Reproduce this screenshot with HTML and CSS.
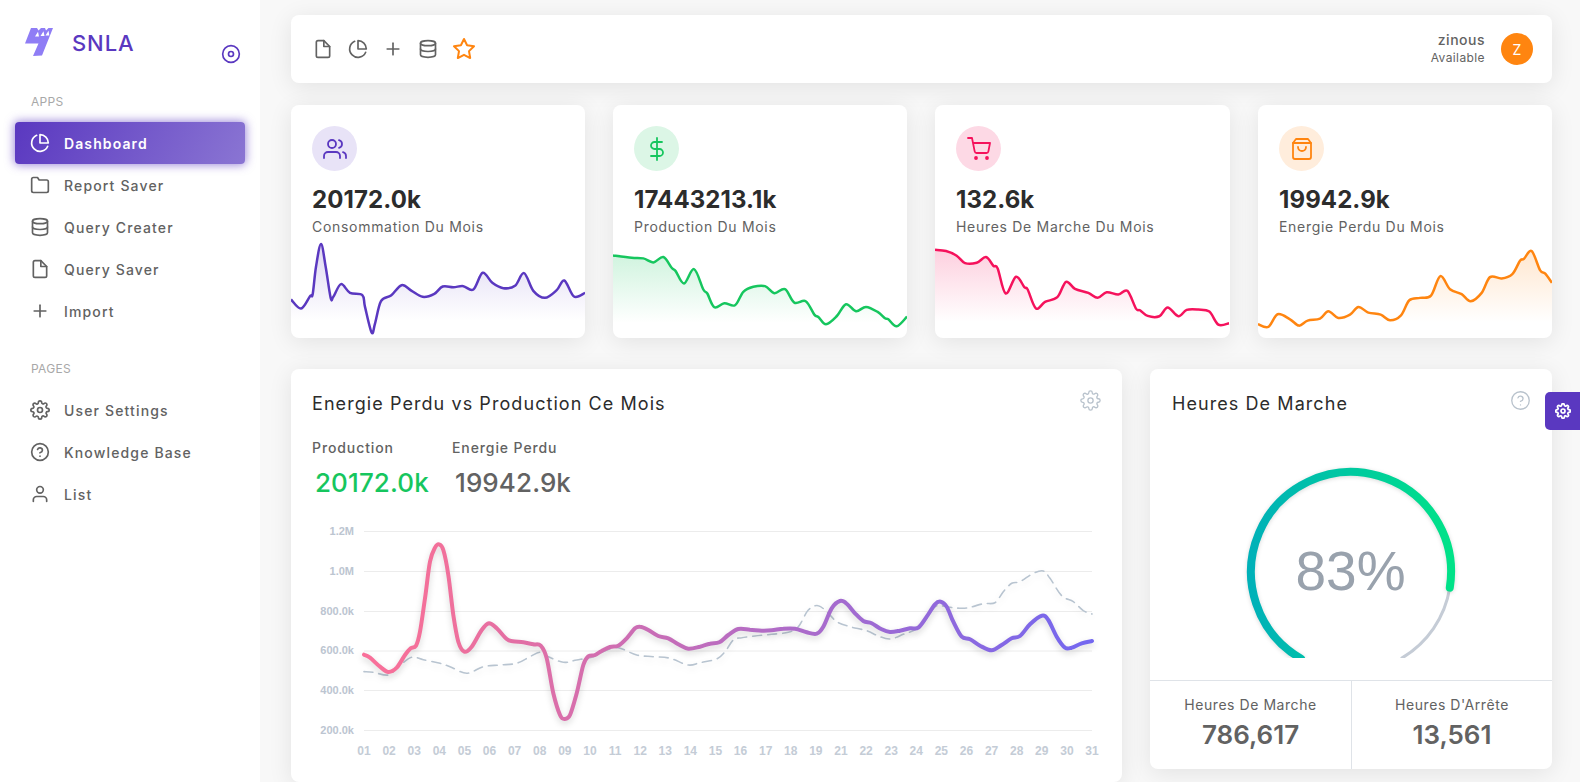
FILE: index.html
```html
<!DOCTYPE html>
<html lang="en">
<head>
<meta charset="utf-8">
<title>SNLA Dashboard</title>
<link rel="stylesheet" href="styles.css">
</head>
<body>
<svg class="sprite" aria-hidden="true">
  <symbol id="i-file" viewBox="0 0 24 24"><path d="M13 2H6a2 2 0 0 0-2 2v16a2 2 0 0 0 2 2h12a2 2 0 0 0 2-2V9z"/><polyline points="13 2 13 9 20 9"/></symbol>
  <symbol id="i-pie" viewBox="0 0 24 24"><path d="M21.21 15.89A10 10 0 1 1 8 2.83"/><path d="M22 12A10 10 0 0 0 12 2v10z"/></symbol>
  <symbol id="i-plus" viewBox="0 0 24 24"><line x1="12" y1="5" x2="12" y2="19"/><line x1="5" y1="12" x2="19" y2="12"/></symbol>
  <symbol id="i-db" viewBox="0 0 24 24"><ellipse cx="12" cy="5" rx="9" ry="3"/><path d="M21 12c0 1.66-4 3-9 3s-9-1.34-9-3"/><path d="M3 5v14c0 1.66 4 3 9 3s9-1.34 9-3V5"/></symbol>
  <symbol id="i-star" viewBox="0 0 24 24"><polygon points="12 2 15.09 8.26 22 9.27 17 14.14 18.18 21.02 12 17.77 5.82 21.02 7 14.14 2 9.27 8.91 8.26 12 2"/></symbol>
  <symbol id="i-users" viewBox="0 0 24 24"><path d="M17 21v-2a4 4 0 0 0-4-4H5a4 4 0 0 0-4 4v2"/><circle cx="9" cy="7" r="4"/><path d="M23 21v-2a4 4 0 0 0-3-3.87"/><path d="M16 3.13a4 4 0 0 1 0 7.75"/></symbol>
  <symbol id="i-dollar" viewBox="0 0 24 24"><line x1="12" y1="1" x2="12" y2="23"/><path d="M17 5H9.5a3.5 3.5 0 0 0 0 7h5a3.5 3.5 0 0 1 0 7H6"/></symbol>
  <symbol id="i-cart" viewBox="0 0 24 24"><circle cx="9" cy="21" r="1"/><circle cx="20" cy="21" r="1"/><path d="M1 1h4l2.68 13.39a2 2 0 0 0 2 1.61h9.72a2 2 0 0 0 2-1.61L23 6H6"/></symbol>
  <symbol id="i-bag" viewBox="0 0 24 24"><path d="M6 2L3 6v14a2 2 0 0 0 2 2h14a2 2 0 0 0 2-2V6l-3-4z"/><line x1="3" y1="6" x2="21" y2="6"/><path d="M16 10a4 4 0 0 1-8 0"/></symbol>
  <symbol id="i-folder" viewBox="0 0 24 24"><path d="M22 19a2 2 0 0 1-2 2H4a2 2 0 0 1-2-2V5a2 2 0 0 1 2-2h5l2 3h9a2 2 0 0 1 2 2z"/></symbol>
  <symbol id="i-gear" viewBox="0 0 24 24"><circle cx="12" cy="12" r="3"/><path d="M19.4 15a1.65 1.65 0 0 0 .33 1.82l.06.06a2 2 0 0 1 0 2.83 2 2 0 0 1-2.83 0l-.06-.06a1.65 1.65 0 0 0-1.82-.33 1.65 1.65 0 0 0-1 1.51V21a2 2 0 0 1-2 2 2 2 0 0 1-2-2v-.09A1.65 1.65 0 0 0 9 19.4a1.65 1.65 0 0 0-1.82.33l-.06.06a2 2 0 0 1-2.83 0 2 2 0 0 1 0-2.83l.06-.06a1.65 1.65 0 0 0 .33-1.82 1.65 1.65 0 0 0-1.51-1H3a2 2 0 0 1-2-2 2 2 0 0 1 2-2h.09A1.65 1.65 0 0 0 4.6 9a1.65 1.65 0 0 0-.33-1.82l-.06-.06a2 2 0 0 1 0-2.83 2 2 0 0 1 2.83 0l.06.06a1.65 1.65 0 0 0 1.82.33H9a1.65 1.65 0 0 0 1-1.51V3a2 2 0 0 1 2-2 2 2 0 0 1 2 2v.09a1.65 1.65 0 0 0 1 1.51 1.65 1.65 0 0 0 1.82-.33l.06-.06a2 2 0 0 1 2.83 0 2 2 0 0 1 0 2.83l-.06.06a1.65 1.65 0 0 0-.33 1.82V9a1.65 1.65 0 0 0 1.51 1H21a2 2 0 0 1 2 2 2 2 0 0 1-2 2h-.09a1.65 1.65 0 0 0-1.51 1z"/></symbol>
  <symbol id="i-help" viewBox="0 0 24 24"><circle cx="12" cy="12" r="10"/><path d="M9.09 9a3 3 0 0 1 5.83 1c0 2-3 3-3 3"/><line x1="12" y1="17" x2="12.01" y2="17"/></symbol>
  <symbol id="i-user" viewBox="0 0 24 24"><path d="M20 21v-2a4 4 0 0 0-4-4H8a4 4 0 0 0-4 4v2"/><circle cx="12" cy="7" r="4"/></symbol>
  <symbol id="i-disc" viewBox="0 0 24 24"><circle cx="12" cy="12" r="10"/><circle cx="12" cy="12" r="3"/></symbol>
</svg>

<aside class="sidebar">
  <div class="brand">
    <svg class="brand-logo" viewBox="25 28 28 28"><path class="bolt" d="M31 28L37 28L38.500 30.500L41 28L45 28L46 30.500L48.500 28L53 28L42 55.500L33 56L38.500 43.500L25 43.500Z"/><path class="bolt-notch" d="M35 36.500L38 31.800L39 36.500ZM40.500 36L43.500 31.300L44.500 36ZM45.500 35.500L48.500 30.800L49.300 35.500Z"/></svg>
    <span class="brand-name">SNLA</span>
    <svg class="ico brand-toggle"><use href="#i-disc"/></svg>
  </div>
  <div class="nav-label">APPS</div>
  <nav class="nav">
    <a class="nav-item active"><svg class="ico"><use href="#i-pie"/></svg>Dashboard</a>
    <a class="nav-item"><svg class="ico"><use href="#i-folder"/></svg>Report Saver</a>
    <a class="nav-item"><svg class="ico"><use href="#i-db"/></svg>Query Creater</a>
    <a class="nav-item"><svg class="ico"><use href="#i-file"/></svg>Query Saver</a>
    <a class="nav-item"><svg class="ico"><use href="#i-plus"/></svg>Import</a>
  </nav>
  <div class="nav-label nav-label-pages">PAGES</div>
  <nav class="nav">
    <a class="nav-item"><svg class="ico"><use href="#i-gear"/></svg>User Settings</a>
    <a class="nav-item"><svg class="ico"><use href="#i-help"/></svg>Knowledge Base</a>
    <a class="nav-item"><svg class="ico"><use href="#i-user"/></svg>List</a>
  </nav>
</aside>

<main class="main">
  <header class="topbar card">
    <div class="shortcuts">
      <svg class="ico"><use href="#i-file"/></svg>
      <svg class="ico"><use href="#i-pie"/></svg>
      <svg class="ico"><use href="#i-plus"/></svg>
      <svg class="ico"><use href="#i-db"/></svg>
      <svg class="ico ico-star"><use href="#i-star"/></svg>
    </div>
    <div class="profile">
      <div class="profile-text">
        <div class="profile-name">zinous</div>
        <div class="profile-status">Available</div>
      </div>
      <div class="avatar">Z</div>
    </div>
  </header>

  <section class="stats">
    <article class="stat card">
      <div class="stat-icon tone-purple"><svg class="ico"><use href="#i-users"/></svg></div>
      <div class="stat-value">20172.0k</div>
      <div class="stat-label">Consommation Du Mois</div>
      <svg class="spark" id="spark-a" viewBox="3 690 882 293" preserveAspectRatio="none"></svg>
    </article>
    <article class="stat card">
      <div class="stat-icon tone-green"><svg class="ico"><use href="#i-dollar"/></svg></div>
      <div class="stat-value">17443213.1k</div>
      <div class="stat-label">Production Du Mois</div>
      <svg class="spark" id="spark-b" viewBox="9 420 882 293" preserveAspectRatio="none"></svg>
    </article>
    <article class="stat card">
      <div class="stat-icon tone-pink"><svg class="ico"><use href="#i-cart"/></svg></div>
      <div class="stat-value">132.6k</div>
      <div class="stat-label">Heures De Marche Du Mois</div>
      <svg class="spark" id="spark-c" viewBox="15 420 885 293" preserveAspectRatio="none"></svg>
    </article>
    <article class="stat card">
      <div class="stat-icon tone-orange"><svg class="ico"><use href="#i-bag"/></svg></div>
      <div class="stat-value">19942.9k</div>
      <div class="stat-label">Energie Perdu Du Mois</div>
      <svg class="spark" id="spark-d" viewBox="24 690 882 293" preserveAspectRatio="none"></svg>
    </article>
  </section>

  <section class="panels">
    <article class="panel panel-chart card">
      <div class="panel-head">
        <h2 class="panel-title">Energie Perdu vs Production Ce Mois</h2>
        <svg class="ico panel-action"><use href="#i-gear"/></svg>
      </div>
      <div class="totals">
        <div class="total">
          <div class="total-label">Production</div>
          <div class="total-value total-green">20172.0k</div>
        </div>
        <div class="total">
          <div class="total-label">Energie Perdu</div>
          <div class="total-value">19942.9k</div>
        </div>
      </div>
      <svg class="line-chart" id="line-chart" viewBox="291 510 831 272"></svg>
    </article>

    <article class="panel panel-gauge card">
      <div class="panel-head">
        <h2 class="panel-title">Heures De Marche</h2>
        <svg class="ico panel-action"><use href="#i-help"/></svg>
      </div>
      <svg class="gauge" viewBox="1150 416 402 242">
        <defs>
          <linearGradient id="gauge-grad" gradientUnits="userSpaceOnUse" x1="1251" y1="0" x2="1451" y2="0">
            <stop offset="0" stop-color="#00b1b8"/>
            <stop offset="1" stop-color="#00e288"/>
          </linearGradient>
        </defs>
        <path class="gauge-track" d="M1449.8 587.6A100 100 0 0 1 1401 658.6"/>
        <path class="gauge-arc" d="M1301 658.6A100 100 0 1 1 1449.8 587.6"/>
        <text class="gauge-text" x="1350.500" y="590" text-anchor="middle">83%</text>
      </svg>
      <div class="gauge-foot">
        <div class="foot-cell">
          <div class="foot-label">Heures De Marche</div>
          <div class="foot-value">786,617</div>
        </div>
        <div class="foot-cell">
          <div class="foot-label">Heures D'Arrête</div>
          <div class="foot-value">13,561</div>
        </div>
      </div>
    </article>
  </section>
</main>

<button class="customizer" aria-label="Settings"><svg class="ico"><use href="#i-gear"/></svg></button>
<script src="chart.js"></script>
</body>
</html>
```
FILE: styles.css
```css
* { box-sizing: border-box; }

html, body { height: 100%; }

body {
  margin: 0;
  display: flex;
  overflow: hidden;
  background: #f8f8f8;
  color: #626262;
  font-family: "Inter", "Liberation Sans", sans-serif;
  font-size: 14px;
}

.sprite { display: none; }

.ico {
  width: 20px;
  height: 20px;
  flex: none;
  fill: none;
  stroke: currentColor;
  stroke-width: 2;
  stroke-linecap: round;
  stroke-linejoin: round;
}

.card {
  background: #fff;
  border-radius: 8px;
  box-shadow: 0 4px 25px rgba(0, 0, 0, .09);
}

/* Sidebar */
.sidebar {
  flex: none;
  width: 260px;
  background: #fff;
}

.brand {
  display: flex;
  align-items: flex-start;
  height: 92px;
  padding: 28px 0 0 25px;
}

.brand-logo { width: 28px; height: 28px; flex: none; }
.bolt { fill: #8f7df5; }
.bolt-notch { fill: #fff; }

.brand-name {
  margin-left: 19px;
  color: #5a38c0;
  font-size: 22px;
  font-weight: 500;
  line-height: 30px;
  letter-spacing: .9px;
}

.brand-toggle {
  margin: 16px 0 0 86px;
  color: #5a38c0;
}

.nav-label {
  height: 20px;
  margin: 0 0 10px 31px;
  color: #a8a8a8;
  font-size: 12px;
  line-height: 20px;
  letter-spacing: .3px;
}

.nav-label-pages { margin-top: 27px; }

.nav { display: flex; flex-direction: column; }

.nav-item {
  display: flex;
  align-items: center;
  gap: 14px;
  height: 42px;
  margin: 0 15px;
  padding-left: 15px;
  border-radius: 4px;
  color: #626262;
  font-size: 14px;
  font-weight: 500;
  letter-spacing: 1.15px;
}

.nav-item.active {
  background: linear-gradient(118deg, #5a38c0, #8a75d3);
  box-shadow: 0 0 10px 1px rgba(90, 56, 192, .6);
  color: #fff;
  font-weight: 600;
  letter-spacing: 1.1px;
}

/* Main */
.main {
  flex: 1;
  min-width: 0;
  padding: 15px 28px 0 31px;
}

.topbar {
  display: flex;
  align-items: center;
  justify-content: space-between;
  height: 68px;
  margin-bottom: 22px;
  padding: 0 19px 0 22px;
}

.shortcuts {
  display: flex;
  align-items: center;
  gap: 15px;
  color: #626262;
}

.ico-star { width: 24px; height: 24px; margin-left: -1px; color: #ff8510; }

.profile { display: flex; align-items: center; gap: 16px; }
.profile-text { text-align: right; }
.profile-name { font-size: 14px; font-weight: 500; line-height: 18px; letter-spacing: .5px; }
.profile-status { font-size: 12px; line-height: 18px; letter-spacing: .4px; }

.avatar {
  display: flex;
  align-items: center;
  justify-content: center;
  width: 32px;
  height: 32px;
  border-radius: 50%;
  background: #ff8510;
  color: #fff;
  font-size: 14px;
}

.stats {
  display: grid;
  grid-template-columns: 294px 294px 295px 294px;
  gap: 28px;
  margin-bottom: 31px;
}

.stat {
  display: flex;
  flex-direction: column;
  height: 233px;
  padding-top: 21px;
  overflow: hidden;
}

.stat-icon {
  display: flex;
  align-items: center;
  justify-content: center;
  width: 45px;
  height: 45px;
  margin-left: 21px;
  border-radius: 50%;
}

.stat-icon .ico { width: 24px; height: 24px; stroke-width: 1.8; }

.tone-purple { background: #e8e3f7; color: #5a38c0; }
.tone-green { background: #dcf6e6; color: #16c65e; }
.tone-pink { background: #fdd9e5; color: #f5125c; }
.tone-orange { background: #ffeddc; color: #ff8510; }

.stat-value {
  margin: 14px 0 0 21px;
  color: #2c2c2c;
  font-size: 24px;
  font-weight: 700;
  line-height: 30px;
  letter-spacing: .1px;
}

.stat-label {
  margin: 2px 0 0 21px;
  font-size: 14px;
  line-height: 20px;
  letter-spacing: .7px;
}

.spark {
  display: block;
  width: 100%;
  height: 98px;
  margin-top: auto;
}

.panels {
  display: grid;
  grid-template-columns: 831fr 402fr;
  align-items: start;
  gap: 28px;
}

.panel { overflow: hidden; }

.panel-head {
  display: flex;
  align-items: flex-start;
  justify-content: space-between;
  padding: 21px 21px 0;
}

.panel-title {
  margin: 1px 0 -1px;
  color: #2c2c2c;
  font-size: 18px;
  font-weight: 400;
  line-height: 26px;
  letter-spacing: 1.07px;
}

.panel-gauge .panel-title { margin-left: 1px; }

.panel-action {
  width: 21px;
  height: 21px;
  stroke-width: 1.5;
  color: #b8c2cc;
}

.totals {
  display: flex;
  margin: 22px 0 0 21px;
}

.total { width: 140px; }

.total-label {
  font-size: 14px;
  font-weight: 500;
  line-height: 20px;
  letter-spacing: .9px;
}

.total-value {
  margin: 7px 0 0 3px;
  font-size: 26px;
  font-weight: 500;
  line-height: 36px;
  letter-spacing: .1px;
}

.total-green { color: #16c65e; }

.line-chart {
  display: block;
  width: 100%;
  height: 272px;
  margin-top: 9px;
}

.grid-line { stroke: #ececec; stroke-width: 1; }

.tick {
  fill: #bcc5d1;
  font-family: "Liberation Sans", sans-serif;
  font-size: 11px;
  font-weight: 700;
}

.tick-x { fill: #c4ccd6; font-size: 12px; }

.series {
  fill: none;
  stroke-linecap: round;
  stroke-linejoin: round;
}

.series-dashed {
  stroke: #b8c4d0;
  stroke-width: 1.6;
  stroke-dasharray: 9 6;
  filter: drop-shadow(0 3px 3px rgba(0, 0, 0, .08));
}

.series-main {
  stroke-width: 4;
  filter: drop-shadow(0 3px 3px rgba(0, 0, 0, .16));
}

.spark-line {
  fill: none;
  stroke-width: 7.5;
  stroke-linejoin: round;
}

.gauge {
  display: block;
  width: 100%;
  height: 242px;
  margin-bottom: 22px;
}

.gauge-track { fill: none; stroke: #c5ccd6; stroke-width: 3; }

.gauge-arc {
  fill: none;
  stroke: url(#gauge-grad);
  stroke-width: 8;
  stroke-linecap: round;
  filter: drop-shadow(0 1px 2px rgba(0, 0, 0, .15));
}

.gauge-text {
  fill: #99a2ad;
  font-family: "Liberation Sans", sans-serif;
  font-size: 55px;
}

.gauge-foot {
  display: grid;
  grid-template-columns: 202px 1fr;
  height: 89px;
  border-top: 1px solid #dfe3e8;
}

.foot-cell {
  padding-top: 14px;
  text-align: center;
}

.foot-cell:first-child { border-right: 1px solid #dfe3e8; }

.foot-label { font-size: 14px; line-height: 20px; letter-spacing: .55px; }

.foot-value {
  margin-top: 4px;
  font-size: 26px;
  font-weight: 600;
  line-height: 32px;
}

.customizer {
  position: absolute;
  top: 392px;
  right: 0;
  display: flex;
  align-items: center;
  justify-content: center;
  width: 35px;
  height: 38px;
  padding: 0;
  border: 0;
  border-radius: 5px 0 0 5px;
  background: #5a38c0;
  color: #fff;
}

.customizer .ico { width: 16px; height: 16px; stroke-width: 2.6; }
```
FILE: chart.js
```js
// Sampled series drawn as smooth curves (Catmull-Rom converted to cubic Bezier).
function smooth(pts) {
  let d = `M${pts[0][0]} ${pts[0][1]}`;
  for (let i = 0; i < pts.length - 1; i++) {
    const p0 = pts[i - 1] || pts[i];
    const p1 = pts[i];
    const p2 = pts[i + 1];
    const p3 = pts[i + 2] || p2;
    const c1x = p1[0] + (p2[0] - p0[0]) / 6;
    const c1y = p1[1] + (p2[1] - p0[1]) / 6;
    const c2x = p2[0] - (p3[0] - p1[0]) / 6;
    const c2y = p2[1] - (p3[1] - p1[1]) / 6;
    d += `C${c1x.toFixed(1)} ${c1y.toFixed(1)} ${c2x.toFixed(1)} ${c2y.toFixed(1)} ${p2[0].toFixed(1)} ${p2[1].toFixed(1)}`;
  }
  return d;
}

const sparks = [
  { id: 'spark-a', color: '#5a38c0', bottom: 983, pts: [[3,868],[33,895],[60,858],[68,852],[78,770],[93,702],[107,770],[122,863],[130,860],[153,822],[180,848],[217,855],[225,890],[245,967],[255,940],[273,873],[303,856],[335,825],[365,842],[398,860],[433,851],[458,829],[490,831],[520,828],[550,838],[578,788],[607,818],[640,834],[675,827],[702,789],[730,842],[765,863],[800,840],[823,811],[852,859],[885,848]] },
  { id: 'spark-b', color: '#16c65e', bottom: 713, pts: [[9,466],[65,473],[100,475],[130,487],[160,471],[185,503],[197,513],[222,550],[252,507],[280,568],[292,580],[313,621],[343,609],[375,615],[400,575],[430,560],[465,558],[493,579],[525,567],[553,607],[587,603],[613,643],[625,650],[648,672],[680,648],[708,612],[738,633],[768,620],[803,635],[825,654],[835,657],[860,678],[891,649]] },
  { id: 'spark-c', color: '#f5125c', bottom: 713, pts: [[15,449],[48,453],[80,467],[105,489],[140,488],[168,471],[190,497],[203,505],[227,580],[258,530],[283,561],[293,568],[318,625],[345,605],[382,591],[408,545],[435,566],[475,578],[503,593],[530,576],[565,583],[592,572],[618,625],[630,630],[653,647],[688,648],[713,622],[745,648],[770,629],[805,628],[838,634],[865,673],[897,669]] },
  { id: 'spark-d', color: '#ff8510', bottom: 983, pts: [[24,942],[55,950],[83,912],[120,927],[147,946],[173,931],[210,925],[235,903],[265,923],[300,913],[325,890],[355,907],[392,913],[420,930],[453,915],[478,870],[510,863],[543,856],[571,798],[600,837],[635,852],[662,873],[695,848],[720,801],[755,805],[787,792],[810,752],[822,746],[845,723],[870,780],[885,790],[906,818]] }
];

sparks.forEach(({ id, color, bottom, pts }) => {
  const line = smooth(pts);
  const first = pts[0][0];
  const last = pts[pts.length - 1][0];
  document.getElementById(id).innerHTML = `
    <defs><linearGradient id="${id}-fill" x1="0" y1="0" x2="0" y2="1">
      <stop offset="0" stop-color="${color}" stop-opacity=".2"/>
      <stop offset=".82" stop-color="${color}" stop-opacity="0"/>
    </linearGradient></defs>
    <path d="${line}L${last} ${bottom}L${first} ${bottom}Z" fill="url(#${id}-fill)"/>
    <path class="spark-line" d="${line}" stroke="${color}"/>`;
});

// The main chart: values sampled from two halves, expressed in page pixels.
const left = ([x, y]) => [290 + x / 3, 365 + y / 3];
const right = ([x, y]) => [700 + x / 3, 365 + y / 3];

const production = [
  ...[[222,869],[240,878],[270,905],[295,921],[320,908],[345,870],[362,850],[378,842],[390,800],[405,700],[420,590],[435,548],[447,538],[460,555],[475,630],[490,750],[505,830],[523,860],[545,845],[575,795],[597,775],[620,790],[650,822],[668,829],[700,832],[730,838],[752,842],[770,880],[790,985],[810,1050],[824,1062],[840,1050],[860,985],[880,900],[895,874],[915,870],[935,858],[960,846],[985,842],[1010,820],[1035,790],[1050,785],[1075,795],[1105,813],[1135,820],[1165,838],[1195,851]].map(left),
  ...[[0,845],[30,836],[58,832],[85,810],[115,792],[150,794],[185,797],[215,796],[250,791],[285,791],[320,802],[350,806],[370,785],[395,730],[420,708],[440,716],[465,745],[490,768],[515,775],[545,793],[570,801],[600,797],[630,790],[655,788],[680,755],[705,718],[722,710],[740,725],[760,770],[785,815],[810,823],[840,842],[875,856],[905,840],[935,820],[960,813],[990,778],[1025,752],[1045,765],[1070,815],[1095,848],[1115,848],[1145,835],[1176,828]].map(right)
];

const lost = [
  ...[[222,920],[250,922],[295,930],[325,905],[365,877],[400,884],[450,895],[480,905],[530,925],[580,905],[630,900],[680,895],[720,875],[750,862],[775,875],[820,892],[860,885],[910,875],[950,855],[985,848],[1040,870],[1090,875],[1140,880],[1195,900]].map(left),
  ...[[0,893],[50,882],[75,860],[100,825],[125,818],[165,813],[215,808],[265,802],[295,785],[325,735],[355,722],[385,745],[410,770],[450,785],[500,797],[535,813],[570,822],[610,808],[660,785],[700,730],[720,722],[760,728],[800,729],[850,716],[885,713],[910,680],[935,655],[960,650],[1000,625],[1030,618],[1050,640],[1085,692],[1120,710],[1150,737],[1176,747]].map(right)
];

const yTicks = [[531.5,'1.2M'],[571.5,'1.0M'],[611.5,'800.0k'],[651,'600.0k'],[690.5,'400.0k'],[730.5,'200.0k']];
const days = ['01','02','03','04','05','06','07','08','09','10','11','12','13','14','15','16','17','18','19','21','22','23','24','25','26','27','28','29','30','31'];
const x0 = 364;
const x1 = 1092;

const grid = yTicks.map(([y, t]) =>
  `<line class="grid-line" x1="${x0}" x2="${x1}" y1="${y}" y2="${y}"/><text class="tick" x="354" y="${y + 3}" text-anchor="end">${t}</text>`
).join('');
const xLabels = days.map((d, i) =>
  `<text class="tick tick-x" x="${x0 + i * (x1 - x0) / 29}" y="755" text-anchor="middle">${d}</text>`
).join('');

document.getElementById('line-chart').innerHTML = `
  <defs><linearGradient id="main-grad" gradientUnits="userSpaceOnUse" x1="${x0}" y1="0" x2="${x1}" y2="0">
    <stop offset="0" stop-color="#f9709a"/>
    <stop offset=".1" stop-color="#f2709a"/>
    <stop offset="1" stop-color="#7367f0"/>
  </linearGradient></defs>
  ${grid}${xLabels}
  <path class="series series-dashed" d="${smooth(lost)}"/>
  <path class="series series-main" d="${smooth(production)}" stroke="url(#main-grad)"/>`;
```
